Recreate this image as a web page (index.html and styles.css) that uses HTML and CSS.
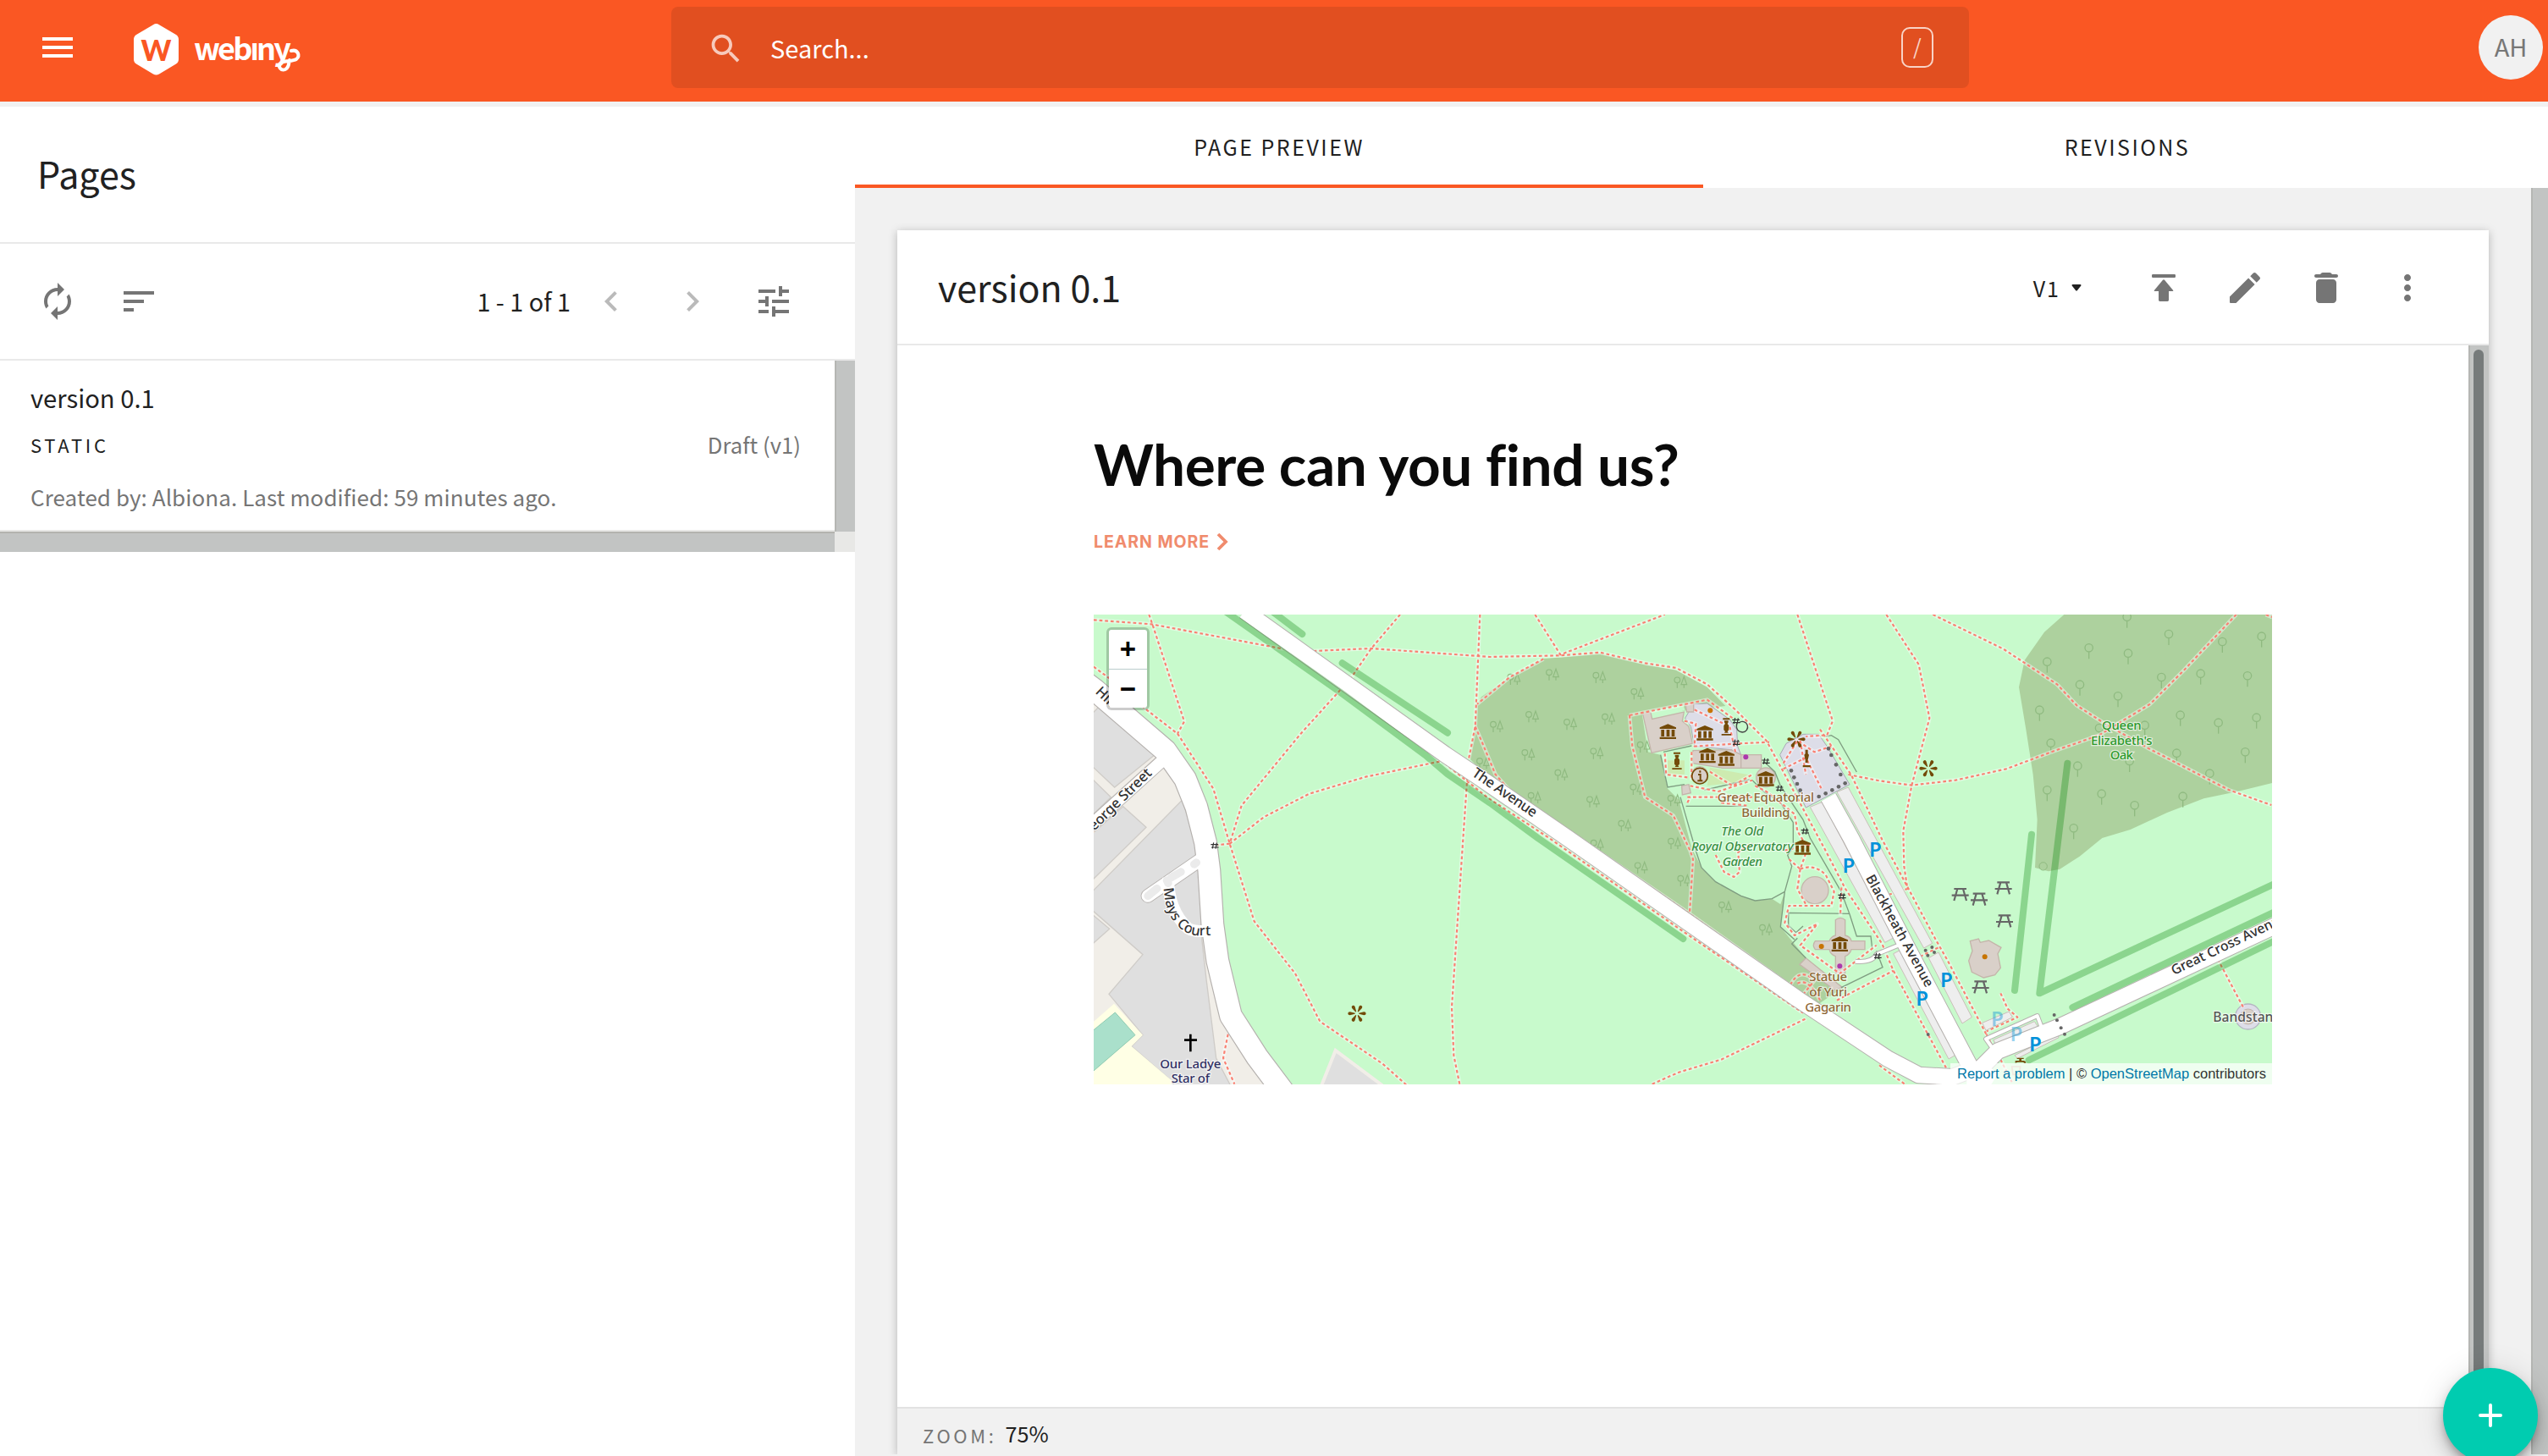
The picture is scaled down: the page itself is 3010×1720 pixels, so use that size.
FILE: index.html
```html
<!DOCTYPE html>
<html lang="en">
<head>
<meta charset="utf-8">
<title>Webiny - Pages</title>
<link rel="stylesheet" href="styles.css">
</head>
<body>
<header class="topbar">
  <svg class="icon menu" viewBox="0 0 24 24"><path d="M3 18h18v-2H3v2zm0-5h18v-2H3v2zm0-7v2h18V6H3z"/></svg>
  <svg class="logo" viewBox="0 0 202 64" width="202" height="64">
    <path d="M23 2.2q3.500-2.200 7 0L50 14q3 2 3 5.500V43q0 3.500-3 5.500L30 60.500q-3.500 2.200-7 0L3 48.500Q0 46.500 0 43V19.500Q0 16 3 14Z" fill="#fff"/>
    <text class="logo-mark" x="26.500" y="45" text-anchor="middle" textLength="35">W</text>
    <text class="logo-word" x="71" y="44" textLength="115">webıny</text>
    <path d="M186 33c8-2 11 6 6 10-5 3-16 1-19 5-3 4 1 9 6 7 4-2 4-6 5-11" fill="none" stroke="#fff" stroke-width="4" stroke-linecap="round"/>
  </svg>
  <div class="search">
    <svg class="icon" viewBox="0 0 24 24"><path d="M15.500 14h-.79l-.28-.27C15.410 12.590 16 11.110 16 9.500 16 5.910 13.090 3 9.500 3S3 5.910 3 9.500 5.910 16 9.500 16c1.610 0 3.090-.59 4.230-1.570l.27.28v.79l5 4.990L20.490 19l-4.990-5zm-6 0C7.010 14 5 11.990 5 9.500S7.010 5 9.500 5 14 7.010 14 9.500 11.990 14 9.500 14z"/></svg>
    <span class="search-text">Search...</span>
    <kbd>/</kbd>
  </div>
  <div class="avatar">AH</div>
</header>
<div class="page">
  <section class="list-panel">
    <h1>Pages</h1>
    <div class="toolbar">
      <svg class="icon" viewBox="0 0 24 24"><path d="M12 6v3l4-4-4-4v3c-4.420 0-8 3.580-8 8 0 1.570.46 3.030 1.240 4.260L6.700 14.800c-.45-.83-.7-1.790-.7-2.800 0-3.310 2.690-6 6-6zm6.760 1.740L17.300 9.200c.44.84.7 1.790.7 2.800 0 3.310-2.690 6-6 6v-3l-4 4 4 4v-3c4.420 0 8-3.580 8-8 0-1.570-.46-3.030-1.240-4.260z"/></svg>
      <svg class="icon sort" viewBox="0 0 24 24"><path d="M3 18h6v-2H3v2zM3 6v2h18V6H3zm0 7h12v-2H3v2z"/></svg>
      <span class="range">1 - 1 of 1</span>
      <svg class="icon dim prev" viewBox="0 0 24 24"><path d="M15.410 7.410L14 6l-6 6 6 6 1.410-1.410L10.830 12z"/></svg>
      <svg class="icon dim" viewBox="0 0 24 24"><path d="M10 6L8.590 7.410 13.170 12l-4.580 4.590L10 18l6-6z"/></svg>
      <svg class="icon" viewBox="0 0 24 24"><path d="M3 17v2h6v-2H3zM3 5v2h10V5H3zm10 16v-2h8v-2h-8v-2h-2v6h2zM7 9v2H3v2h4v2h2V9H7zm14 4v-2H11v2h10zm-6-4h2V7h4V5h-4V3h-2v6z"/></svg>
    </div>
    <div class="list">
      <article class="item">
        <div class="item-title">version 0.1</div>
        <div class="item-row"><span class="kind">STATIC</span><span class="status">Draft (v1)</span></div>
        <div class="item-meta">Created by: Albiona. Last modified: 59 minutes ago.</div>
      </article>
      <div class="vbar"></div>
      <div class="hbar"></div>
      <div class="corner"></div>
    </div>
  </section>
  <section class="detail">
    <nav class="tabs">
      <span class="tab active">PAGE PREVIEW</span>
      <span class="tab">REVISIONS</span>
    </nav>
    <div class="scroller">
      <div class="card">
        <div class="card-head">
          <h2>version 0.1</h2>
          <span class="version">V1</span>
          <svg class="caret" viewBox="0 0 12 8" width="12" height="8"><path d="M1.500 0h9q1 0 1 1.200L6.800 7.200q-.8.800-1.600 0L.5 1.200Q.5 0 1.500 0z"/></svg>
          <svg class="icon" viewBox="0 0 24 24"><path d="M5.600 4h12.800a.6.6 0 0 1 .6.6v.8a.6.6 0 0 1-.6.6H5.600a.6.600 0 0 1-.6-.6v-.8a.6.600 0 0 1 .6-.6zM6.700 14H9v5.300q0 .7.700.7h4.600q.7 0 .7-.7V14h2.300q.7 0 .2-.6l-5-6q-.5-.5-1 0l-5 6q-.5.600.2.600z"/></svg>
          <svg class="icon" viewBox="0 0 24 24"><path d="M3 17.250V20.500q0 .5.500.5h3.250L17.810 9.940l-3.750-3.750L3 17.250zM20.710 7.040a1 1 0 0 0 0-1.410l-2.340-2.340a1 1 0 0 0-1.410 0l-1.830 1.830 3.750 3.750 1.830-1.830z"/></svg>
          <svg class="icon" viewBox="0 0 24 24"><path d="M6 19c0 1.100.9 2 2 2h8c1.100 0 2-.9 2-2V9c0-1.100-.9-2-2-2H8c-1.100 0-2 .9-2 2v10zM18 4h-2.500l-.71-.71c-.18-.18-.44-.29-.7-.29H9.910c-.26 0-.52.110-.7.290L8.500 4H6c-.55 0-1 .45-1 1s.45 1 1 1h12c.55 0 1-.45 1-1s-.45-1-1-1z"/></svg>
          <svg class="icon" viewBox="0 0 24 24"><path d="M12 8c1.100 0 2-.9 2-2s-.9-2-2-2-2 .9-2 2 .9 2 2 2zm0 2c-1.100 0-2 .9-2 2s.9 2 2 2 2-.9 2-2-.9-2-2-2zm0 6c-1.100 0-2 .9-2 2s.9 2 2 2 2-.9 2-2-.9-2-2-2z"/></svg>
        </div>
        <div class="preview">
          <div class="content">
            <h3>Where can you find us?</h3>
            <a class="learn">LEARN MORE<svg viewBox="0 0 14 22" width="14" height="22"><path d="M2 2l9 9-9 9" fill="none" stroke="#f08b6d" stroke-width="3.800"/></svg></a>
            <div class="map">
<svg viewBox="36 33 4176 1665" width="1392" height="555" preserveAspectRatio="none">
<defs>
  <g id="museum" fill="#734a08"><path d="M-29-15L0-27 29-15V-10H-29zM-24-7h11v24h-11zM-5-7h11v24h-11zM13-7h11v24h-11zM-29 19H29v7H-29z"/></g>
  <g id="view" fill="#734a08"><path id="petal" d="M7-1.500L25-6q7 0 7 6t-7 6L7 1.500z"/><use href="#petal" transform="rotate(60)"/><use href="#petal" transform="rotate(120)"/><use href="#petal" transform="rotate(180)"/><use href="#petal" transform="rotate(240)"/><use href="#petal" transform="rotate(300)"/></g>
  <g id="picnic" stroke="#666" stroke-width="6.500" fill="none"><path d="M-22-20H22M-30 3H30M-10-20L-22 22M10-20L22 22"/></g>
  <g id="gate" stroke="#333" stroke-width="3.600" fill="none"><path d="M-14-4H12M-12 6H14M-4-11L-8 10M7-10L3 11"/></g>
  <g id="pair" stroke="#8fba80" stroke-width="3.500" fill="none"><circle cx="-12" cy="-8" r="10"/><path d="M-12 2v18M12-20L2 8H22zM12 8V20"/></g>
  <g id="tree" stroke="#8fba80" stroke-width="4" fill="none"><circle r="14" cy="-5"/><path d="M0 10v24"/></g>
  <g id="bust" fill="#734a08"><path d="M-12-31h24v6h-24zM-7-22h14v6l-3 5 5 6v16l-5 5 3 5h-14l3-5-5-5V-5l5-6-3-5zM-17 25h34v5h-34z"/></g>
</defs>
<rect x="36" y="33" width="4176" height="1665" fill="#c8facc"/>
<!-- woods -->
<path fill="#add19e" d="M1410 325L1395 350 1388 430 1370 545 1410 585 1790 850 2150 1100 2500 1350 2580 1430 2690 1355 2560 1250 2470 1140 2485 1015 2440 1040 2380 1047 2330 1030 2240 980 2190 930 2155 860 2110 690 2070 650 2045 530 2000 520 1980 390 2275 357 2210 290 2100 230 1990 210 1830 172 1630 190 1510 255Z"/>
<path fill="#add19e" d="M3475 33L3405 95 3335 195 3315 290 3340 440 3365 600 3380 760 3372 930 3420 943 3460 935 3530 890 3610 825 3710 795 3840 735 3970 685 4090 660 4212 630V33Z"/>
<g>
<use href="#pair" x="1662" y="246"/><use href="#pair" x="1828" y="256"/><use href="#pair" x="1525" y="262"/><use href="#pair" x="1963" y="314"/><use href="#pair" x="2116" y="273"/><use href="#pair" x="1590" y="395"/><use href="#pair" x="1464" y="430"/><use href="#pair" x="1725" y="422"/><use href="#pair" x="1860" y="403"/><use href="#pair" x="1576" y="530"/><use href="#pair" x="1819" y="525"/><use href="#pair" x="1693" y="601"/><use href="#pair" x="1985" y="502"/><use href="#pair" x="1598" y="682"/><use href="#pair" x="1806" y="696"/><use href="#pair" x="1918" y="781"/><use href="#pair" x="1960" y="652"/><use href="#pair" x="2093" y="692"/><use href="#pair" x="2094" y="844"/><use href="#pair" x="1976" y="930"/><use href="#pair" x="2128" y="976"/><use href="#pair" x="2274" y="1070"/><use href="#pair" x="2418" y="1150"/><use href="#pair" x="1820" y="850"/><use href="#pair" x="1416" y="560"/>
</g>
<g transform="translate(2820 0)">
<use href="#tree" x="878" y="46"/><use href="#tree" x="743" y="156"/><use href="#tree" x="882" y="175"/><use href="#tree" x="595" y="205"/><use href="#tree" x="1026" y="107"/><use href="#tree" x="1216" y="134"/><use href="#tree" x="1355" y="115"/><use href="#tree" x="711" y="286"/><use href="#tree" x="1000" y="260"/><use href="#tree" x="1139" y="247"/><use href="#tree" x="1305" y="255"/><use href="#tree" x="846" y="327"/><use href="#tree" x="568" y="376"/><use href="#tree" x="1067" y="394"/><use href="#tree" x="1202" y="421"/><use href="#tree" x="1337" y="403"/><use href="#tree" x="941" y="430"/><use href="#tree" x="780" y="440"/><use href="#tree" x="608" y="493"/><use href="#tree" x="1054" y="529"/><use href="#tree" x="1297" y="525"/><use href="#tree" x="703" y="574"/><use href="#tree" x="887" y="557"/><use href="#tree" x="1171" y="601"/><use href="#tree" x="595" y="660"/><use href="#tree" x="788" y="673"/><use href="#tree" x="1076" y="682"/><use href="#tree" x="905" y="714"/><use href="#tree" x="689" y="795"/><circle cx="581" cy="925" r="14" fill="none" stroke="#8fba80" stroke-width="3"/>
</g>
<!-- built-up area on the west side -->
<path fill="#f1eee8" d="M36 290L290 510 360 610 400 710 432 840 455 1130 478 1270 522 1455 615 1600 720 1740H36Z"/>
<g fill="#dfdfdf" stroke="#cfccc8" stroke-width="4">
<path d="M30 385L52 362 252 530 110 645 30 570Z"/><path d="M30 615L97 680 30 745Z"/><path d="M30 810L140 713 222 787 30 975Z"/>
<path d="M350 690L400 850 408 940 418 1150 420 1190 435 1325 470 1605 525 1710H330L305 1680 170 1563 210 1523 90 1378 210 1238 30 1080V1016Z"/>
<path d="M30 1095L92 1147 30 1202Z"/>
</g>
<path fill="#ffffe5" d="M36 1475L108 1412 210 1523 170 1563 312 1684V1698H36Z"/>
<path fill="#aae0cb" stroke="#8ecbb2" stroke-width="3" d="M30 1510L112 1443 183 1523 30 1655Z"/>
<path fill="#dfdfdf" stroke="#f1eee8" stroke-width="12" d="M840 1710L893 1578 1070 1710Z"/>
<!-- plazas, lawns and buildings -->
<g transform="translate(1410 0)">
<path fill="#c8facc" d="M640 530L745 505 900 540 960 620 1060 700 1150 800 1060 1060 1030 1040 970 1047 830 980 760 870 705 680Z"/>
<path fill="#c8facc" d="M598 376L715 352 722 372 606 398Z"/>
<path fill="#c8facc" d="M640 530L745 510 752 560 950 600 950 620 660 645Z"/>
<path fill="#cdebb0" d="M810 575L955 602 930 625 800 640ZM660 550h60v50h-60z"/>
<g fill="#dddde8" stroke="#a7a9b4" stroke-width="3">
<path d="M752 350L800 348 880 405 905 440 908 500 920 530 885 512 755 500 742 430 722 400Z"/>
<path d="M1058 530L1080 490 1140 457 1195 457 1225 500 1305 635 1150 717Z"/></g>
<g fill="#d9d0c9" stroke="#c4b5aa" stroke-width="4">
<path d="M572 385L600 380 605 403 718 378 712 410 735 430 748 490 603 523Z"/><path d="M750 515L885 512 920 530H992V577H855L750 560Z"/><path d="M920 530v47"/><circle cx="1008" cy="610" r="34"/><path d="M710 640L735 635 742 665 712 672ZM723 350L752 347V378L728 378Z"/>
<circle cx="774" cy="600" r="28"/>
<circle cx="1182" cy="1010" r="48"/>
<path d="M1255 1115q17-14 34 0v55q20 5 22 20h48v30h-48q-5 18-22 24v60h-34v-60q-18-6-22-24h-50q-12-15 0-30h50q5-15 22-20z"/>
<path d="M1150 1250L1280 1355 1250 1362 1128 1273Z"/></g>
</g>
<path fill="#d9d0c9" stroke="#c4b5aa" stroke-width="4" d="M3142 1190L3172 1182 3178 1195 3208 1188 3252 1213 3240 1235 3250 1285 3230 1310 3190 1320 3148 1300 3137 1260 3150 1225Z"/>
<circle cx="4127" cy="1458" r="45" fill="#dddde8" stroke="#b5b5c2" stroke-width="4"/><circle cx="4127" cy="1458" r="27" fill="#d9d0c9" stroke="#c4b5aa" stroke-width="3"/>
<path transform="translate(1410 0)" fill="none" stroke="#7f9d81" stroke-width="4" d="M1000 553L1040 590 1060 640 1140 760 1165 825 1275 1015 1305 1095 1330 1173H1380L1385 1215M1220 465l20-4 25 15 65 115M635 530L660 645 720 635M790 655L950 618M645 520L745 498M705 680L760 870 780 930 830 980 920 1030 970 1047 1030 1040 1075 1015M725 712H935M960 620L1000 660 1060 700 1105 770V860L1085 885 1100 925 1075 1015 1060 1140 1110 1185M1305 1093L1088 1090V1135L1115 1160 1140 1137M1120 1180L1100 1200 1150 1250M1275 1355L1422 1283 1400 1225"/>
<!-- footpaths: pale casing, then the dashes -->
<defs><path id="foot" d="M36 52L240 67 710 155M815 162L1020 153 1440 183 1690 178 1830 167 1990 205 2100 222 2210 280 2310 370 2420 480 2480 590 2560 740 2630 870 2700 1005 2830 1200 2870 1295 3060 1645M232 33L245 70 357 412 333 455M36 218L100 265 220 368 333 455 460 650 518 845 605 1120 750 1305 838 1475 1060 1625 1150 1705M518 845L470 850M1122 33L1020 153 950 255M910 300L770 455 560 710 518 845 640 750 800 668 1000 608 1270 552M1405 33L1388 430 1365 545M1360 610L1345 830 1305 1425 1312 1595 1333 1698M1388 430L1410 480 1460 600 1540 690 1770 835 2150 1095 2500 1345 2560 1405M1630 190L1510 255 1395 350M1280 560L1430 680 1650 825 2145 1170 2550 1445M2630 1445L2850 1590M1600 33L1690 175 2060 33M1935 390L2210 335 2300 400M1935 390L1945 500 1990 680 2090 745 2150 870 2160 900 2148 1090M2530 33L2655 410 2635 460 2560 465M2610 440L2720 600 2830 830 3020 1185 3060 1255 3220 1560M2710 600L2820 622 2935 638 3090 620 3270 580 3430 520 3600 460 3780 350 3900 230 4085 33M3010 33L3260 155 3450 280 3520 355 3620 420 3770 505 4060 655 4210 708M4190 33L4212 42M2845 33L2960 210 2998 400 2935 638 2905 800 2908 925 2920 1005 2855 1025M2965 1245L3035 1210M3250 1375L3275 1430 3310 1460 3200 1510M4020 1255L4110 1425M2015 1697L2110 1655 2260 1610 2560 1465M2670 1400L2870 1295M2820 1570L2960 1655 3060 1645M2820 1630L2910 1697M512 1520L495 1605 535 1697M3200 1520L3225 1570M3250 1610L3290 1690M2240 885L2270 945 2305 963 2325 945 2320 875 2370 845M2540 935Q2590 915 2630 955L2660 1015 2650 1065H2500L2485 1125 2520 1170 2600 1130 2540 1205 2680 1305 2810 1205M2540 935L2530 1005 2560 1060M2686 1000L2682 1100M2500 900L2540 935 2570 850 2480 870M2505 1345Q2540 1280 2590 1330L2550 1380M2530 1340Q2570 1320 2610 1400M2165 370L2290 430 2310 520M2130 410L2170 420 2165 500 2320 490 2430 485M2060 525L2065 600 2140 610M2155 520V620M2220 590L2300 640 2370 600M2150 640L2250 660 2370 620M2140 680H2370M2140 700L2150 680M2480 560L2530 480 2590 520 2650 500M2480 580L2560 540 2615 650M2540 480L2560 600M2380 640L2420 660 2520 740 2530 800 2560 850M2260 700L2350 710"/></defs>
<g fill="none" stroke-linejoin="round"><use href="#foot" stroke="#fff" stroke-opacity=".45" stroke-width="14"/><use href="#foot" stroke="#fa8072" stroke-width="6.500" stroke-dasharray="11 9"/></g>
<!-- parking strips -->
<g fill="#eee" stroke="#cbbfba" stroke-width="3">
<path d="M2575 715L2618 697 2872 1178 2840 1195ZM2670 662L2710 645 3008 1198 2978 1215ZM2870 1235L2895 1222 3092 1593 3066 1608ZM2995 1250L3030 1230 3148 1460 3114 1482ZM3185 1480L3280 1440 3292 1460 3198 1507ZM3225 1540L3370 1475 3382 1493 3236 1565ZM3300 1595L3452 1520 3456 1532 3310 1606Z"/></g>
<!-- streets -->
<g fill="none" stroke-linejoin="round">
<g stroke="#b5b1ae">
<path stroke-width="18" d="M3225 1575L3198 1537 3380 1455 3397 1500M2735 1262q60 5 75-25L2900 1200"/>
<path stroke-width="50" stroke-linecap="round" d="M228 1030L410 905"/><path stroke-width="48" d="M0 803L285 545"/>
<path stroke-width="84" d="M-20 255L40 300 290 515 360 615 400 715 432 840 445 940 457 1130 475 1260 522 1455 615 1600 720 1740"/>
<path stroke-width="62" d="M570 20L1280 528 1410 615 1715 825 2530 1395 2850 1607 2960 1665 3080 1672 3165 1640M3150 1670L3240 1580 3460 1493 4240 1128M2640 680L2720 825 2920 1215 3150 1650"/></g>
<g stroke="#fff">
<path stroke-width="12" d="M3225 1575L3198 1537 3380 1455 3397 1500M2735 1262q60 5 75-25L2900 1200"/>
<path stroke-width="45" stroke-linecap="round" d="M228 1030L410 905"/><path stroke-width="42" d="M300 965Q300 1080 370 1145Q390 1157 440 1155"/><path stroke-width="42" d="M0 803L300 532"/>
<path stroke-width="77" d="M-20 255L40 300 290 515 360 615 400 715 432 840 445 940 457 1130 475 1260 522 1455 615 1600 720 1740"/>
<path stroke-width="56" d="M570 20L1280 528 1410 615 1715 825 2530 1395 2850 1607 2960 1665 3080 1672 3165 1640M3150 1670L3240 1580 3460 1493 4240 1128M2640 680L2720 825 2920 1215 3150 1650"/></g>
<path d="M3130 1660L3180 1610 3240 1660 3210 1710H3130Z" fill="#fff"/>
<path stroke="#ebebeb" stroke-width="28" stroke-linecap="round" d="M228 1030L260 1004M310 965L345 945M392 918L400 912M295 975L300 985"/>
</g>
<!-- tree rows -->
<g fill="none" stroke="#008000" stroke-opacity=".3" stroke-width="24" stroke-linecap="round" stroke-linejoin="round">
<path d="M500 20L910 308 1210 530 1290 598 1440 700 1610 825 2125 1182M660 15L775 102M917 205L1290 452"/>
<path d="M3487 560L3388 1375 4240 978M3360 812L3300 1365M3505 1425L4240 1078M3350 1612L4240 1180"/></g>
<!-- points of interest -->
<g transform="translate(1410 0)">
<use href="#museum" x="661" y="448"/><use href="#museum" x="792" y="453"/><use href="#museum" x="801" y="533"/><use href="#museum" x="868" y="543"/><use href="#museum" x="1008" y="615"/><use href="#museum" x="1138" y="858"/><use href="#museum" x="1270" y="1201"/>
<use href="#bust" x="868" y="431"/><use href="#bust" x="693" y="552"/>
<path fill="#734a08" d="M1148 512h9v14l4 4-4 18v10h-9v-10l-4-18 4-4zM1139 567h27v7h-27z"/>
<circle cx="774" cy="605" r="28" fill="none" stroke="#734a08" stroke-width="5"/><path d="M775 586v7M768 600h8v22M766 622h18" fill="none" stroke="#734a08" stroke-width="6"/>
<circle cx="811" cy="373" r="9" fill="#c77400"/><circle cx="937" cy="538" r="9" fill="#ac39ac"/><circle cx="1205" cy="1209" r="9" fill="#c77400"/><circle cx="1270" cy="1279" r="9" fill="#ac39ac"/>
<path d="M905 418q-5 30 20 32a19 19 0 1 0-12-34" fill="none" stroke="#444" stroke-width="4"/>
<use href="#gate" x="903" y="410"/><use href="#gate" x="903" y="487"/><use href="#gate" x="1008" y="553"/><use href="#gate" x="1057" y="649"/><use href="#gate" x="1147" y="801"/><use href="#gate" x="1278" y="1031"/><use href="#gate" x="1404" y="1243"/>
<g fill="#666"><circle cx="1230" cy="508" r="7"/><circle cx="1240" cy="531" r="7"/><circle cx="1257" cy="565" r="7"/><circle cx="1273" cy="600" r="7"/><circle cx="1289" cy="631" r="7"/><circle cx="1266" cy="643" r="7"/><circle cx="1243" cy="655" r="7"/><circle cx="1220" cy="667" r="7"/><circle cx="1196" cy="678" r="7"/><circle cx="1098" cy="586" r="7"/><circle cx="1108" cy="610" r="7"/><circle cx="1119" cy="633" r="7"/><circle cx="1130" cy="656" r="7"/></g>
</g>
<use href="#gate" x="465" y="852"/><use href="#view" x="2526" y="475"/><use href="#view" x="969" y="1447"/><use href="#view" x="2994" y="578"/>
<use href="#picnic" x="3107" y="1025"/><use href="#picnic" x="3174" y="1042"/><use href="#picnic" x="3260" y="1002"/><use href="#picnic" x="3264" y="1119"/><use href="#picnic" x="3179" y="1353"/>
<circle cx="3194" cy="1246" r="9" fill="#c77400"/>
<g fill="#666"><circle cx="2984" cy="1223" r="6"/><circle cx="2992" cy="1241" r="6"/><circle cx="3007" cy="1212" r="6"/><circle cx="3015" cy="1230" r="6"/><circle cx="2993" cy="1521" r="6"/><circle cx="3440" cy="1452" r="6"/><circle cx="3450" cy="1471" r="6"/><circle cx="3464" cy="1498" r="6"/><circle cx="3477" cy="1520" r="6"/></g>
<path d="M379 1520v62M357 1541h45" stroke="#000" stroke-width="8"/>
<path d="M3302 1622v-8h14v-6h-8v-4h24v4h-8v6h6q10 0 10 8h-7q0-3-6-3h-16z" fill="#734a08"/><path d="M3290 1635h30l-4 28h-22z" fill="none" stroke="#d4b79a" stroke-width="5"/>
<!-- labels -->
<g class="parking"><text x="2712" y="947">P</text><text x="2806" y="891">P</text><text x="3058" y="1352">P</text><text x="2972" y="1419">P</text><text x="3373" y="1581">P</text><g opacity=".4"><text x="3238" y="1492">P</text><text x="3306" y="1545">P</text></g></g>
<defs><path id="mays" d="M284 1003C288 1060 300 1100 330 1132Q365 1171 415 1171L520 1171"/><path id="heath" d="M2771 966L2995 1375"/></defs>
<g class="street"><text transform="translate(2 836) rotate(-44.500)" x="14" y="0" textLength="326">George Street</text>
<text transform="translate(40 310) rotate(43)">Hill</text>
<text><textPath href="#mays">Mays Court</textPath></text>
<text transform="translate(1374 602) rotate(34.500)" textLength="266">The Avenue</text>
<text class="tight"><textPath href="#heath" textLength="446">Blackheath Avenue</textPath></text>
<text class="tight" transform="translate(3864 1311) rotate(-25.500)">Great Cross Avenue</text></g>
<g class="label brown"><text x="2418" y="697" textLength="343">Great Equatorial</text><text x="2418" y="751" textLength="172">Building</text><text x="2639" y="1331" textLength="134">Statue</text><text x="2639" y="1385" textLength="134">of Yuri</text><text x="2639" y="1439" textLength="164">Gagarin</text></g>
<g class="label garden"><text x="2335" y="816" textLength="150">The Old</text><text x="2335" y="870" textLength="362">Royal Observatory</text><text x="2335" y="923" textLength="142">Garden</text></g>
<g class="label oak"><text x="3679" y="440" textLength="140">Queen</text><text x="3679" y="494" textLength="218">Elizabeth's</text><text x="3679" y="547" textLength="82">Oak</text></g>
<g class="label church"><text x="379" y="1640" textLength="216">Our Ladye</text><text x="379" y="1693" textLength="136">Star of</text></g>
<text class="label band" x="4003" y="1477">Bandstand</text>
</svg>
              <div class="zoomctl"><span>+</span><span>−</span></div>
              <div class="attrib"><a>Report a problem</a> | © <a>OpenStreetMap</a> contributors</div>
            </div>
          </div>
          <div class="inner-bar"><i></i></div>
        </div>
        <footer class="zoombar"><span class="zl">ZOOM:</span><span class="zv">75%</span></footer>
      </div>
      <div class="outer-bar"></div>
    </div>
  </section>
</div>
<button class="fab"><svg viewBox="0 0 28 28" width="28" height="28"><path d="M14 2v24M2 14h24" stroke="#fff" stroke-width="4" stroke-linecap="round"/></svg></button>
</body>
</html>
```
FILE: styles.css
```css
* { box-sizing: border-box; }
body { margin: 0; width: 3010px; height: 1720px; overflow: hidden; background: #f1f1f1; color: #212121; font-family: "Noto Sans CJK SC", "Noto Sans", sans-serif; font-size: 29px; display: flex; flex-direction: column; position: relative; }
h1, h2, h3 { margin: 0; font-weight: 400; }
.icon { width: 48px; height: 48px; fill: #757575; flex: none; display: block; }

.topbar { height: 120px; flex: none; background: #fa5723; display: flex; align-items: center; padding: 0 6px 8px 44px; }
.menu { fill: #fff; }
.logo { margin: 6px 0 0 66px; flex: none; }
.logo-mark { font: 900 34px "Lato", sans-serif; fill: #fa5723; }
.logo-word { font: 700 36px "Noto Sans CJK SC", sans-serif; fill: #fff; }
.search { margin-left: 433px; width: 1533px; height: 96px; border-radius: 8px; background: #e14f20; display: flex; align-items: center; padding: 0 42px; color: #fff; }
.search .icon { width: 45px; height: 45px; fill: #f7cabc; margin: 2px 30px 0 0; }
.search-text { line-height: 40px; padding-bottom: 1px; }
kbd { margin-left: auto; width: 38px; height: 48px; border: 2px solid #f9d3c6; border-radius: 10px; display: flex; align-items: center; justify-content: center; padding-bottom: 4px; font: 400 25px/40px "Noto Sans CJK SC", sans-serif; color: #f9d3c6; }
.avatar { margin-left: auto; width: 76px; height: 76px; border-radius: 50%; background: #f1f1f1; color: #777; display: flex; align-items: center; justify-content: center; line-height: 76px; padding-bottom: 4px; }

.page { flex: 1; display: flex; margin-top: 6px; min-height: 0; }
.list-panel { width: 1010px; flex: none; background: #fff; }
h1 { height: 162px; border-bottom: 2px solid #e9e9e9; padding: 0 0 4px 44px; font-size: 43px; line-height: 156px; }
.toolbar { height: 138px; border-bottom: 2px solid #e9e9e9; display: flex; align-items: center; gap: 48px; padding: 0 72px 0 44px; }
.range { margin-left: auto; line-height: 40px; font-size: 28.800px; }
.prev { margin-left: -24px; }
.dim { fill: #bababa; }
.list { display: grid; grid-template-columns: 986px 24px; grid-template-rows: 202px 24px; }
.item { border-bottom: 2px solid #e8e8e6; padding: 23px 40px 0 36px; }
.item-title { line-height: 40px; font-size: 29.200px; }
.item-row { margin-top: 18px; display: flex; justify-content: space-between; line-height: 36px; }
.kind { font-size: 22px; letter-spacing: 3.700px; }
.status, .item-meta { font-size: 26px; color: #757575; }
.status { font-size: 25.700px; }
.item-meta { margin-top: 26px; line-height: 36px; letter-spacing: .07px; }
.vbar { background: #c2c4c3; border-left: 2px solid #b5b6b3; }
.hbar { background: #c2c4c3; border-top: 2px solid #b3b3af; }
.corner { background: #e8e8e6; }

.detail { flex: 1; min-width: 0; display: flex; flex-direction: column; }
.tabs { display: flex; height: 96px; flex: none; background: #fff; overflow: hidden; }
.tab { width: 1002px; flex: none; text-align: center; font-size: 25px; line-height: 94px; height: 96px; letter-spacing: 2.500px; border-bottom: 4px solid transparent; }
.tab.active { border-color: #fa5723; }
.scroller { height: 1496px; display: flex; justify-content: space-between; overflow: hidden; padding-left: 50px; }
.outer-bar { width: 20px; background: #c2c4c3; border-left: 2px solid #b5b6b3; }
.card { width: 1880px; margin-top: 50px; height: 1446px; background: #fff; box-shadow: 0 2px 10px rgba(0,0,0,.25); display: flex; flex-direction: column; }
.card-head { height: 136px; flex: none; border-bottom: 2px solid #e9e9e9; display: flex; align-items: center; gap: 48px; padding: 2px 72px 0 48px; }
h2 { font-size: 43px; line-height: 60px; margin: -4px auto 0 0; }
.version { font-size: 25px; letter-spacing: 2px; line-height: 36px; margin-right: -35px; }
.caret { fill: #212121; margin-right: 25px; }
.preview { flex: 1; min-height: 0; display: flex; justify-content: space-between; padding-left: 232px; }
.content { width: 1392px; padding-top: 100px; }
h3 { font: 700 67.500px/80px "Lato", sans-serif; letter-spacing: -.4px; color: #0a0a0a; white-space: nowrap; }
.learn { display: flex; align-items: center; gap: 8px; margin-top: 37px; height: 30px; font: 700 19.500px/30px "Inter", sans-serif; letter-spacing: .95px; color: #f08b6d; }
.map { position: relative; margin-top: 71px; width: 1392px; height: 555px; overflow: hidden; }
.map > svg { display: block; }
.inner-bar { width: 24px; background: #c2c4c3; border-left: 2px solid #b5b6b3; padding: 5px 6px 0 4px; }
.inner-bar i { display: block; height: 100%; background: #767b7b; border-radius: 6px 6px 0 0; }
.zoombar { height: 56px; flex: none; background: #f1f1f1; border-top: 2px solid #e2e2e2; padding-left: 30px; display: flex; }
.zl { font-size: 22px; letter-spacing: 3.600px; color: #757575; line-height: 62px; }
.zv { font-size: 25.200px; line-height: 58px; margin-left: 10px; }

.zoomctl { position: absolute; left: 15px; top: 15px; width: 51px; height: 98px; border: 3px solid rgba(0,0,0,.2); background-clip: padding-box; border-radius: 6px; background-color: #fff; display: flex; flex-direction: column; }
.zoomctl span { flex: 1; display: flex; align-items: center; justify-content: center; font: 700 33px/44px "Liberation Sans", sans-serif; color: #000; padding-top: 1px; }
.zoomctl span:first-child { border-bottom: 1px solid #bcc; }
.attrib { position: absolute; right: 0; bottom: 0; width: 380px; height: 25px; padding-left: 8px; background: rgba(255,255,255,.7); font: 16.500px/25px "Liberation Sans", sans-serif; color: #333; white-space: nowrap; }
.attrib a { color: #0078a8; }

.parking { font: 600 72px "Noto Sans", sans-serif; fill: #0092da; text-anchor: middle; }
.street { font: 500 50px "Noto Sans", sans-serif; fill: #333; stroke: #fff; stroke-width: 6px; paint-order: stroke; }
.tight { font-size: 48px; }
.label { font: 500 45px "Noto Sans", sans-serif; text-anchor: middle; stroke: rgba(255,255,255,.65); stroke-width: 7px; paint-order: stroke; }
.brown { fill: #8f6938; }
.garden { fill: #3a9145; font-style: italic; }
.oak { fill: #2e9a2e; }
.church { fill: #2f2f63; }
.band { fill: #555; text-anchor: start; font-size: 47px; }

.fab { position: absolute; left: 2886px; top: 1616px; width: 112px; height: 112px; border: 0; border-radius: 50%; background: #00ccb0; display: flex; align-items: center; justify-content: center; padding: 0; box-shadow: 0 6px 10px -2px rgba(0,0,0,.25), 0 12px 20px rgba(0,0,0,.16), 0 2px 36px rgba(0,0,0,.12); }
```
